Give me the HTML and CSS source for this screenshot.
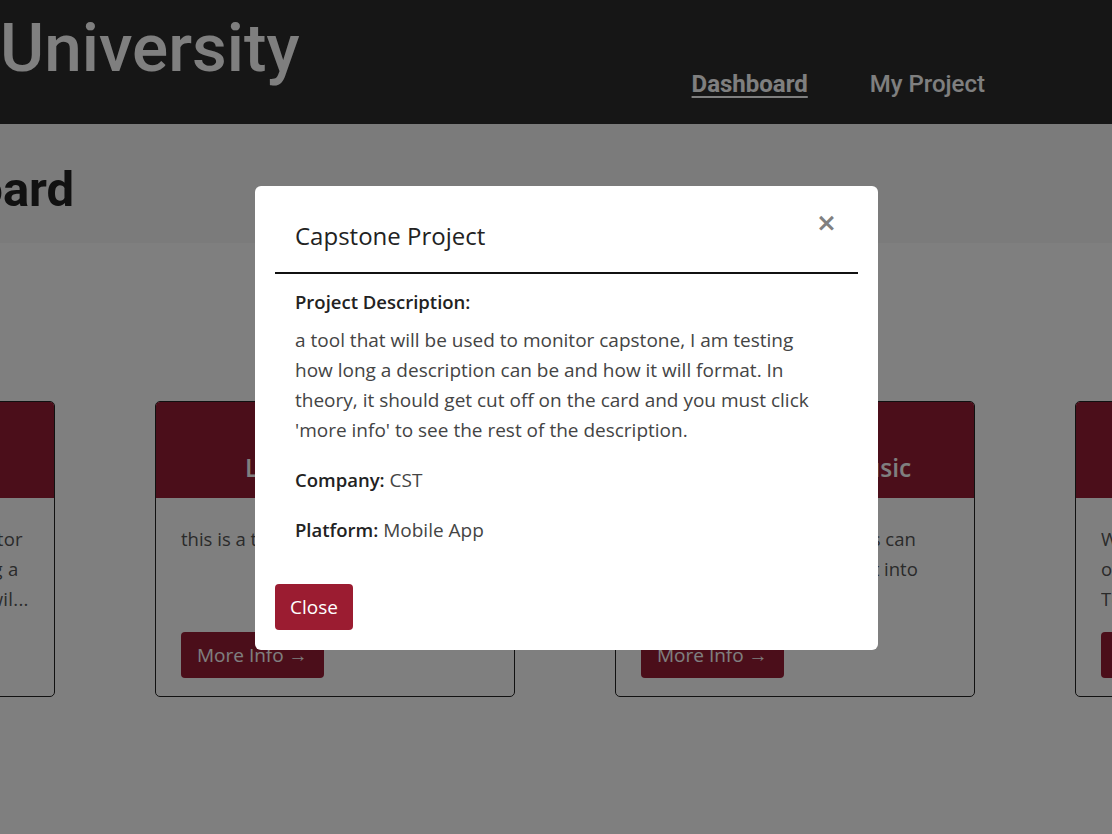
FILE: index.html
```html
<!DOCTYPE html>
<html lang="en">
<head>
<meta charset="utf-8">
<title>Dashboard</title>
<link rel="stylesheet" href="styles.css">
</head>
<body>
<header class="site-header">
  <div class="brand">University</div>
  <nav class="nav">
    <a class="nav-link active" href="#">Dashboard</a>
    <a class="nav-link" href="#">My Project</a>
  </nav>
</header>

<section class="title-strip">
  <h1 class="page-title">Dashboard</h1>
</section>

<main class="main">
  <div class="cards">
    <article class="card">
      <div class="card-head"><h2 class="card-title">Capstone Project</h2></div>
      <div class="card-body">
        <p class="card-text card-text-wide">a tool that will be used to monitor capstone, I am testing how long a description can be and how it wil...</p>
        <a class="btn" href="#">More Info &rarr;</a>
      </div>
    </article>
    <article class="card">
      <div class="card-head"><h2 class="card-title">Library Tracker</h2></div>
      <div class="card-body">
        <p class="card-text">this is a test project</p>
        <a class="btn" href="#">More Info &rarr;</a>
      </div>
    </article>
    <article class="card">
      <div class="card-head"><h2 class="card-title">Collaborative Music</h2></div>
      <div class="card-body">
        <p class="card-text">a platform where musicians can share their tracks and put it into playlists.</p>
        <a class="btn" href="#">More Info &rarr;</a>
      </div>
    </article>
    <article class="card">
      <div class="card-head"><h2 class="card-title">Web Planner</h2></div>
      <div class="card-body">
        <p class="card-text">We are making a web app for organizations and clubs. Tournaments and events...</p>
        <a class="btn" href="#">More Info &rarr;</a>
      </div>
    </article>
  </div>
</main>

<div class="overlay">
  <div class="modal" role="dialog">
    <div class="modal-header">
      <h3 class="modal-title">Capstone Project</h3>
      <button class="modal-x" aria-label="Close">&times;</button>
    </div>
    <div class="modal-body">
      <p class="label-line"><strong>Project Description:</strong></p>
      <p class="desc">a tool that will be used to monitor capstone, I am testing how long a description can be and how it will format. In theory, it should get cut off on the card and you must click 'more info' to see the rest of the description.</p>
      <p class="info"><strong>Company:</strong> CST</p>
      <p class="info"><strong>Platform:</strong> Mobile App</p>
    </div>
    <div class="modal-footer">
      <button class="btn-close">Close</button>
    </div>
  </div>
</div>
</body>
</html>
```

FILE: styles.css
```css
* { box-sizing: border-box; }

html, body {
  margin: 0;
  padding: 0;
}

body {
  width: 1112px;
  height: 834px;
  overflow: hidden;
  background: #ffffff;
  font-family: "Open Sans", "Noto Sans", sans-serif;
  color: #444;
}

.site-header {
  height: 124px;
  background: #2c2c2c;
  display: flex;
  justify-content: space-between;
  padding: 0 127px 0 0;
}

.brand {
  font-family: Roboto, "DejaVu Sans", sans-serif;
  font-weight: 500;
  font-size: 67.5px;
  line-height: 96px;
  color: #ffffff;
}

.nav {
  display: flex;
  gap: 62px;
  padding-top: 66px;
}

.nav-link {
  font-family: Roboto, "DejaVu Sans", sans-serif;
  font-weight: 500;
  font-size: 24px;
  line-height: 36px;
  color: #ffffff;
  text-decoration: none;
}

.nav-link.active {
  font-weight: 700;
  text-decoration: underline;
  text-underline-offset: 4px;
  text-decoration-thickness: 2px;
}

.title-strip {
  height: 119px;
  background: #f6f6f6;
  display: flex;
  align-items: center;
}

.page-title {
  margin: 12px 0 0 -163px;
  font-family: Roboto, "DejaVu Sans", sans-serif;
  font-weight: 700;
  font-size: 49px;
  color: #222;
}

.main {
  padding-top: 158px;
}

.cards {
  display: flex;
  gap: 100px;
  margin-left: -305px;
}

.card {
  flex: 0 0 360px;
  height: 296px;
  border: 1px solid #222;
  border-radius: 5px;
  overflow: hidden;
  display: flex;
  flex-direction: column;
  background: #fff;
}

.card-head {
  height: 96px;
  background: #971c34;
  display: flex;
  align-items: flex-end;
  justify-content: center;
  padding-bottom: 14px;
}

.card-title {
  margin: 0;
  font-size: 24.5px;
  font-weight: 600;
  color: #fff;
  line-height: 32px;
}

.card-body {
  flex: 1;
  display: flex;
  flex-direction: column;
  padding: 26px 25px 18px 25px;
}

.card-text {
  margin: 0;
  font-size: 18.5px;
  line-height: 30px;
  color: #555;
  height: 90px;
  overflow: hidden;
}

.card-text-wide {
  letter-spacing: 0.3px;
}

.btn {
  margin-top: auto;
  align-self: flex-start;
  background: #971c34;
  color: #fff;
  text-decoration: none;
  font-size: 19px;
  line-height: 46px;
  height: 46px;
  padding: 0 16px;
  border-radius: 4px;
}

.overlay {
  position: fixed;
  inset: 0;
  background: rgba(0, 0, 0, 0.5);
  padding: 186px 0 0 255px;
}

.modal {
  width: 623px;
  background: #fff;
  border-radius: 6px;
}

.modal-header {
  margin: 0 20px;
  border-bottom: 2px solid #111;
  display: flex;
  justify-content: space-between;
  align-items: flex-start;
  padding: 34px 20px 20px 20px;
}

.modal-title {
  margin: 0;
  font-size: 24px;
  font-weight: 400;
  line-height: 32px;
  color: #222;
}

.modal-x {
  border: 0;
  background: none;
  padding: 0;
  margin: -10px 1px 0 0;
  font-family: "DejaVu Sans", sans-serif;
  font-size: 25px;
  line-height: 26px;
  color: #808080;
  font-weight: 700;
  cursor: pointer;
}

.modal-body {
  padding: 13px 40px 19px 40px;
}

.modal-body p {
  margin: 0;
  font-size: 19px;
  line-height: 30px;
}

.modal-body strong {
  font-weight: 600;
  font-size: 18.5px;
  color: #222;
}

.label-line {
  margin-bottom: 8px !important;
}

.desc {
  width: 528px;
  color: #444;
  margin-bottom: 20px !important;
}

.info {
  color: #444;
  margin-bottom: 20px !important;
}

.info:last-child {
  margin-bottom: 0 !important;
}

.modal-footer {
  padding: 20px;
}

.btn-close {
  border: 0;
  background: #9b1c31;
  color: #fff;
  font-family: inherit;
  font-size: 19px;
  height: 46px;
  padding: 0 15px;
  border-radius: 4px;
  cursor: pointer;
}
```
